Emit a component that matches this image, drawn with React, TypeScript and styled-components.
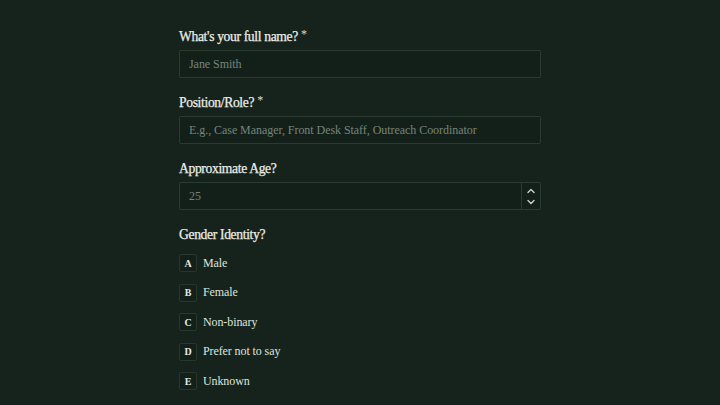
import React from 'react';
import styled, { createGlobalStyle } from 'styled-components';

const GlobalStyle = createGlobalStyle`
  html, body {
    margin: 0;
    padding: 0;
    background: #15231c;
  }
  body {
    font-family: "Liberation Serif", "Times New Roman", serif;
    color: #e6eae4;
  }
`;

const Page = styled.div`
  min-height: 405px;
  background: #15231c;
  display: flex;
  justify-content: center;
  padding-top: 28px;
  box-sizing: border-box;
`;

const Form = styled.form`
  width: 362px;
  display: flex;
  flex-direction: column;
  gap: 16px;
`;

const Field = styled.div`
  display: flex;
  flex-direction: column;
  gap: 4px;
`;

const Label = styled.label`
  font-size: 13.6px;
  line-height: 18px;
  color: #eceee9;
  letter-spacing: -0.35px;
  -webkit-text-stroke: 0.25px #eceee9;
`;

const Required = styled.span`
  font-size: 12px;
  vertical-align: top;
  margin-left: 3px;
  position: relative;
  top: -3px;
  -webkit-text-stroke: 0;
  color: #d8ddd6;
`;

const InputWrap = styled.div`
  display: flex;
  height: 28px;
  box-sizing: border-box;
  border: 1px solid #2a3c30;
  border-radius: 2px;
  background: #13201a;
`;

const TextInput = styled.input`
  flex: 1;
  min-width: 0;
  border: none;
  outline: none;
  background: transparent;
  padding: 0 9px;
  font-family: inherit;
  font-size: 12px;
  letter-spacing: -0.05px;
  color: #e6eae4;
  &::placeholder {
    color: #76857b;
  }
`;

const Spinner = styled.div`
  width: 18px;
  border-left: 1px solid #2a3c30;
  display: flex;
  flex-direction: column;
  align-items: center;
  justify-content: space-around;
  padding: 2px 0;
`;

const Chevron = ({ up }: { up?: boolean }) => (
  <svg width="8" height="6" viewBox="0 0 8 6" fill="none">
    <path
      d={up ? 'M1 4.5L4 1.5L7 4.5' : 'M1 1.5L4 4.5L7 1.5'}
      stroke="#c9d0c9"
      strokeWidth="1.4"
      strokeLinecap="round"
      strokeLinejoin="round"
    />
  </svg>
);

const Options = styled.div`
  display: flex;
  flex-direction: column;
  gap: 11.5px;
  margin-top: 6px;
`;

const Option = styled.label`
  display: flex;
  align-items: center;
  gap: 6px;
  height: 18px;
  cursor: pointer;
`;

const Key = styled.span`
  width: 18px;
  height: 18px;
  box-sizing: border-box;
  border: 1px solid #26372c;
  border-radius: 2px;
  background: #13201a;
  display: flex;
  align-items: center;
  justify-content: center;
  font-size: 10px;
  font-weight: bold;
  color: #e6eae4;
`;

const OptionText = styled.span`
  font-size: 12px;
  letter-spacing: -0.1px;
  color: #dfe4de;
`;

const genders = ['Male', 'Female', 'Non-binary', 'Prefer not to say', 'Unknown'];

export default function App() {
  return (
    <>
      <GlobalStyle />
      <Page>
        <Form onSubmit={(e) => e.preventDefault()}>
          <Field>
            <Label>
              What's your full name?<Required>*</Required>
            </Label>
            <InputWrap>
              <TextInput placeholder="Jane Smith" />
            </InputWrap>
          </Field>
          <Field>
            <Label>
              Position/Role?<Required>*</Required>
            </Label>
            <InputWrap>
              <TextInput placeholder="E.g., Case Manager, Front Desk Staff, Outreach Coordinator" />
            </InputWrap>
          </Field>
          <Field>
            <Label>Approximate Age?</Label>
            <InputWrap>
              <TextInput placeholder="25" inputMode="numeric" />
              <Spinner>
                <Chevron up />
                <Chevron />
              </Spinner>
            </InputWrap>
          </Field>
          <Field>
            <Label>Gender Identity?</Label>
            <Options>
              {genders.map((g, i) => (
                <Option key={g}>
                  <Key>{String.fromCharCode(65 + i)}</Key>
                  <OptionText>{g}</OptionText>
                </Option>
              ))}
            </Options>
          </Field>
        </Form>
      </Page>
    </>
  );
}
